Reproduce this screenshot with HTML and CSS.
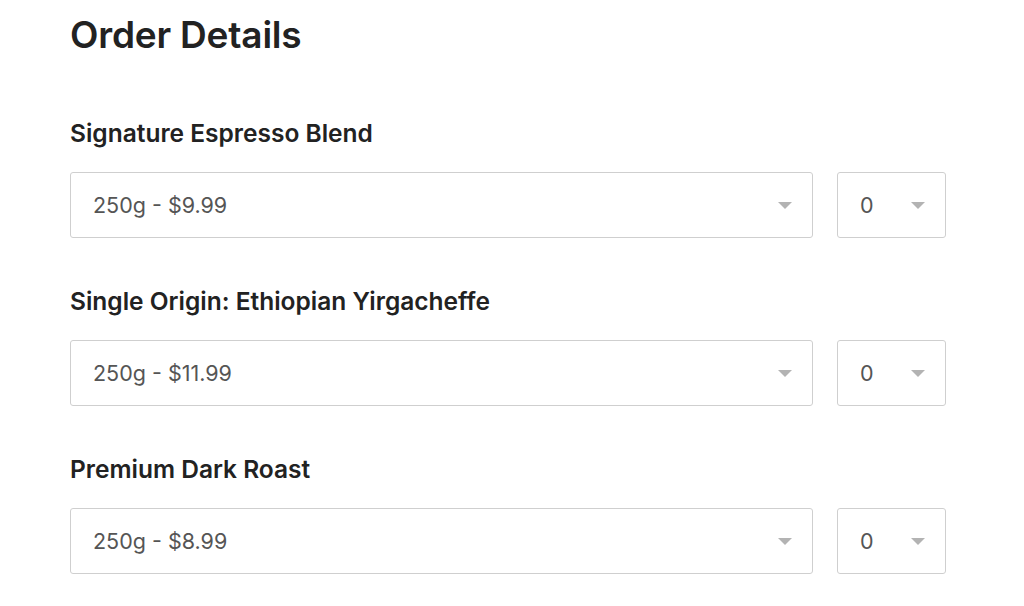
FILE: index.html
```html
<!DOCTYPE html>
<html lang="en">
<head>
<meta charset="utf-8">
<title>Order Details</title>
<link rel="stylesheet" href="styles.css">
</head>
<body>
<main class="order">
  <h1 class="order-title">Order Details</h1>

  <section class="product">
    <h2 class="product-name">Signature Espresso Blend</h2>
    <div class="product-row">
      <div class="select select-size"><span>250g - $9.99</span><i class="caret"></i></div>
      <div class="select select-qty"><span>0</span><i class="caret"></i></div>
    </div>
  </section>

  <section class="product">
    <h2 class="product-name">Single Origin: Ethiopian Yirgacheffe</h2>
    <div class="product-row">
      <div class="select select-size"><span>250g - $11.99</span><i class="caret"></i></div>
      <div class="select select-qty"><span>0</span><i class="caret"></i></div>
    </div>
  </section>

  <section class="product">
    <h2 class="product-name">Premium Dark Roast</h2>
    <div class="product-row">
      <div class="select select-size"><span>250g - $8.99</span><i class="caret"></i></div>
      <div class="select select-qty"><span>0</span><i class="caret"></i></div>
    </div>
  </section>
</main>
</body>
</html>
```

FILE: styles.css
```css
html, body {
  margin: 0;
  padding: 0;
  background: #fff;
}

body {
  font-family: Inter, "Noto Sans", sans-serif;
  color: #222;
}

.order {
  width: 876px;
  padding: 10px 0 0 70px;
  display: flex;
  flex-direction: column;
}

.order-title {
  margin: 0;
  font-size: 37px;
  font-weight: 600;
  line-height: 50px;
  letter-spacing: -0.2px;
  color: #222;
}

.product {
  display: flex;
  flex-direction: column;
}

.order-title + .product {
  margin-top: 57px;
}

.product + .product {
  margin-top: 47px;
}

.product-name {
  margin: 0;
  font-size: 24.5px;
  font-weight: 600;
  line-height: 32px;
  color: #222;
}

.product-row {
  display: flex;
  gap: 24px;
  margin-top: 23px;
}

.select {
  box-sizing: border-box;
  height: 66px;
  border: 1px solid #cfcfcf;
  border-radius: 3px;
  display: flex;
  align-items: center;
  justify-content: space-between;
  padding: 0 20px 0 22px;
  font-size: 21.5px;
  color: #555;
}

.select-size {
  flex: 1;
}

.select-qty {
  width: 109px;
  flex: none;
}

.caret {
  width: 0;
  height: 0;
  border-left: 7px solid transparent;
  border-right: 7px solid transparent;
  border-top: 7px solid #b3b3b3;
}
```
